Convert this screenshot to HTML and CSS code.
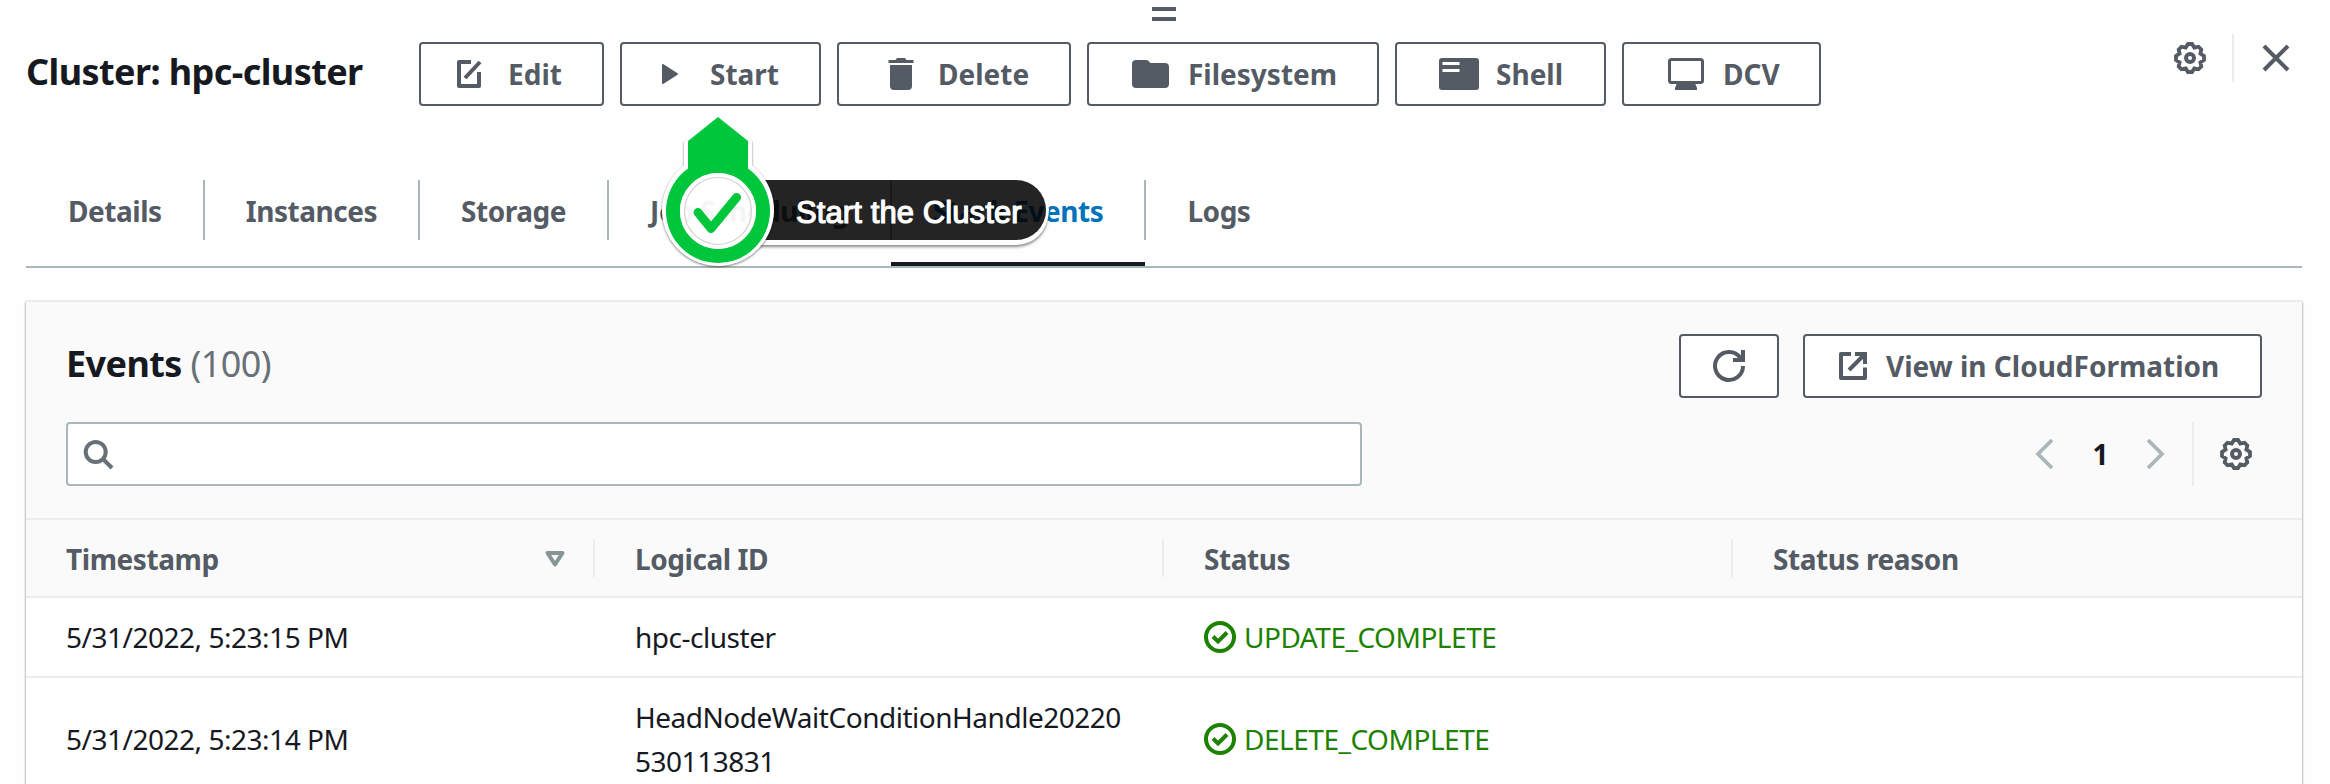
FILE: index.html
```
<!DOCTYPE html>
<html lang="en">
<head>
<meta charset="utf-8">
<title>Cluster: hpc-cluster</title>
<link rel="stylesheet" href="styles.css">
</head>
<body>
<div class="split-panel">
  <div class="drag-handle"><span></span><span></span></div>

  <header class="panel-header">
    <h1 class="panel-title">Cluster: hpc-cluster</h1>
    <div class="actions">
      <button class="btn btn-edit"><svg class="icon" width="32" height="32" viewBox="0 0 32 32"><path d="M17 4H5v24h20V14" fill="none" stroke="currentColor" stroke-width="4" stroke-linejoin="round"/><path d="M11 20 26 4" fill="none" stroke="currentColor" stroke-width="4"/></svg><span>Edit</span></button>
      <button class="btn btn-start"><svg class="icon" width="32" height="32" viewBox="0 0 32 32"><path d="M7 7 21 16 7 25z" fill="currentColor" stroke="currentColor" stroke-width="2" stroke-linejoin="round"/></svg><span>Start</span></button>
      <button class="btn btn-delete"><svg class="icon" width="32" height="32" viewBox="0 0 32 32"><path d="M3.500 2h7l1.500-2h8L21.500 2h7v3h-25zM5 7h22v21q0 4-4 4H9q-4 0-4-4z" fill="currentColor"/></svg><span>Delete</span></button>
      <button class="btn btn-files"><svg class="icon" width="38" height="32" viewBox="0 0 38 32"><path d="M4 2h10q1.500 0 2.500 1l2 2H33q4 0 4 4v17q0 4-4 4H4q-4 0-4-4V6q0-4 4-4z" fill="currentColor"/></svg><span>Filesystem</span></button>
      <button class="btn btn-shell"><svg class="icon" width="40" height="32" viewBox="0 0 40 32"><rect width="40" height="32" rx="3" fill="currentColor"/><path d="M3.500 4h17v3h-17zM3.500 11h17v3h-17z" fill="#fff"/></svg><span>Shell</span></button>
      <button class="btn btn-dcv"><svg class="icon" width="36" height="32" viewBox="0 0 36 32"><rect x="1.500" y="1.500" width="33" height="23" rx="2" fill="none" stroke="currentColor" stroke-width="3"/><path d="M9 25h18l2 5v2H7v-2z" fill="currentColor"/></svg><span>DCV</span></button>
    </div>
    <div class="panel-tools">
      <svg class="icon" width="32" height="32" viewBox="0 0 32 32"><use href="#gear"/></svg>
      <span class="tool-divider"></span>
      <svg class="icon" width="28" height="28" viewBox="0 0 28 28"><path d="M2 2 26 26M26 2 2 26" fill="none" stroke="currentColor" stroke-width="4"/></svg>
    </div>
  </header>

  <nav class="tabs">
    <a class="tab">Details</a>
    <a class="tab">Instances</a>
    <a class="tab">Storage</a>
    <a class="tab">Job Scheduling</a>
    <a class="tab active">Stack Events</a>
    <a class="tab">Logs</a>
  </nav>

  <section class="events">
    <div class="events-top">
      <div class="row">
        <h2>Events <span class="count">(100)</span></h2>
        <div class="row-actions">
          <button class="btn btn-refresh"><svg class="icon" width="32" height="32" viewBox="0 0 32 32"><path d="M30 16A14 14 0 1 1 27.500 8" fill="none" stroke="currentColor" stroke-width="4"/><path d="M30 0v10H20" fill="none" stroke="currentColor" stroke-width="4"/></svg></button>
          <button class="btn btn-view"><svg class="icon" width="32" height="32" viewBox="0 0 32 32"><path d="M14 4H4v24h24V17.500" fill="none" stroke="currentColor" stroke-width="4" stroke-linejoin="round"/><path d="M18 4h10v10M28 4 12 20" fill="none" stroke="currentColor" stroke-width="4"/></svg><span>View in CloudFormation</span></button>
        </div>
      </div>
      <div class="row filter-row">
        <div class="search"><svg class="icon" width="32" height="32" viewBox="0 0 32 32"><circle cx="13.700" cy="14" r="10" fill="none" stroke="currentColor" stroke-width="4"/><path d="m21 21 9 9" stroke="currentColor" stroke-width="4"/></svg></div>
        <div class="pager">
          <svg class="arrow" width="20" height="32" viewBox="0 0 20 32"><path d="M17 2 3 16l14 14" fill="none" stroke="currentColor" stroke-width="3.800"/></svg>
          <b>1</b>
          <svg class="arrow" width="20" height="32" viewBox="0 0 20 32"><path d="m3 2 14 14L3 30" fill="none" stroke="currentColor" stroke-width="3.800"/></svg>
          <span class="pager-divider"></span>
          <svg class="icon" width="32" height="32" viewBox="0 0 32 32"><g id="gear" fill="none" stroke="currentColor"><path d="M14 2H18L20.300 5.600 24.500 4.700 27.300 7.500 26.400 11.700 30 14V18L26.400 20.300 27.300 24.500 24.500 27.300 20.300 26.400 18 30H14L11.700 26.400 7.500 27.300 4.700 24.500 5.600 20.300 2 18V14L5.600 11.700 4.700 7.500 7.500 4.700 11.700 5.600Z" stroke-width="3.800"/><circle cx="16" cy="16" r="4" stroke-width="4"/></g></svg>
        </div>
      </div>
    </div>
    <div class="grid head">
      <div class="cell">Timestamp<svg class="sort" width="20" height="16" viewBox="0 0 20 16"><path d="M2.500 2h15L10 13.500z" fill="none" stroke="currentColor" stroke-width="4" stroke-linejoin="round"/></svg></div>
      <div class="cell">Logical ID</div>
      <div class="cell">Status</div>
      <div class="cell">Status reason</div>
    </div>
    <div class="grid body">
      <div class="cell">5/31/2022, 5:23:15 PM</div>
      <div class="cell">hpc-cluster</div>
      <div class="cell status"><svg width="32" height="32" viewBox="0 0 32 32"><use href="#ok"/></svg>UPDATE_COMPLETE</div>
      <div class="cell"></div>
    </div>
    <div class="grid body">
      <div class="cell">5/31/2022, 5:23:14 PM</div>
      <div class="cell">HeadNodeWaitConditionHandle20220<br>530113831</div>
      <div class="cell status"><svg width="32" height="32" viewBox="0 0 32 32"><g id="ok" fill="none" stroke="currentColor" stroke-width="4"><circle cx="16" cy="16" r="14"/><path d="m9 15.500 5 5 9-9"/></g></svg>DELETE_COMPLETE</div>
      <div class="cell"></div>
    </div>
  </section>

  <div class="callout">
    <div class="callout-label">Start the Cluster</div>
    <svg class="callout-pin" width="120" height="160" viewBox="0 0 120 160">
      <g class="pin-shadow">
        <path d="M26 24h68v24.500a56 56 0 1 1-68 0zM96 94a36 36 0 1 0-72 0 36 36 0 1 0 72 0z" fill="#fff" fill-rule="evenodd"/>
      </g>
      <circle cx="60" cy="94" r="35" fill="#fff" fill-opacity=".94"/>
      <path d="M60 0 90 24v27.500a52 52 0 1 1-60 0V24zM98 94a38 38 0 1 0-76 0 38 38 0 1 0 76 0z" fill="#00c63c" fill-rule="evenodd"/>
      <circle cx="60" cy="94" r="36" fill="none" stroke="#fff" stroke-width="4"/>
      <circle cx="60" cy="94" r="33.500" fill="none" stroke="#d8cfcf" stroke-width="1.200"/>
      <path d="m40 95.500 13 16 25.500-31" fill="none" stroke="#00c63c" stroke-width="9" stroke-linecap="round" stroke-linejoin="round"/>
    </svg>
  </div>
</div>
</body>
</html>
```
FILE: styles.css
```
* { box-sizing: border-box; }
body {
  margin: 0;
  width: 2330px;
  height: 784px;
  overflow: hidden;
  background: #fefefe;
  color: #16191f;
  font: 28px/44px "Noto Sans", sans-serif;
  letter-spacing: -.48px;
}
.split-panel { position: relative; height: 784px; overflow: hidden; padding: 0 28px 0 26px; }
svg { display: block; flex: none; overflow: visible; }
.icon { color: #545b64; }
h1, h2 { margin: 0; font-weight: 700; font-size: 36px; letter-spacing: -.58px; }
.drag-handle { display: flex; flex-direction: column; align-items: center; gap: 6px; height: 42px; padding-top: 7px; }
.drag-handle span { width: 24px; height: 4px; background: #545b64; }

.panel-header { display: flex; height: 138px; align-items: flex-start; }
.panel-title { width: 393px; line-height: 60px; white-space: nowrap; }
.actions { display: flex; gap: 16px; }
.btn {
  display: flex;
  align-items: center;
  height: 64px;
  padding: 0;
  border: 2px solid #545b64;
  border-radius: 4px;
  background: #fff;
  color: #545b64;
  font: 700 28px/44px "Noto Sans", sans-serif;
  letter-spacing: 0;
  white-space: nowrap;
}
.btn-edit { width: 185px; padding-left: 33px; gap: 22px; }
.btn-start { width: 201px; padding-left: 34px; gap: 22px; }
.btn-delete { width: 234px; padding-left: 46px; gap: 21px; }
.btn-files { width: 292px; padding-left: 43px; gap: 18px; }
.btn-shell { width: 211px; padding-left: 42px; gap: 17px; }
.btn-dcv { width: 199px; padding-left: 44px; gap: 19px; }
.panel-tools { display: flex; align-items: center; height: 48px; margin: -8px 12px 0 auto; }
.tool-divider { width: 2px; height: 48px; margin: 0 28px 0 26px; background: #eaeded; }

.tabs { display: flex; height: 88px; border-bottom: 2px solid #aab7b8; }
.tab {
  position: relative;
  height: 86px;
  padding: 9px 42px 0 42px;
  border-bottom: 4px solid transparent;
  color: #545b64;
  font-weight: 700;
  letter-spacing: -.46px;
  white-space: nowrap;
}
.tab:not(:last-child)::after { content: ""; position: absolute; right: -1px; top: 0; width: 2px; height: 60px; background: #aab7b8; }
.tab.active { border-color: #16191f; color: #0073bb; }

.events { margin-top: 32px; background: #fff; border-top: 2px solid #eaeded; box-shadow: 0 2px 2px rgba(0, 28, 36, .35), 1px 2px 2px rgba(0, 28, 36, .15), -1px 2px 2px rgba(0, 28, 36, .15); min-height: 600px; }
.events-top { height: 216px; padding: 32px 40px 0; background: #fafafa; }
.row { display: flex; justify-content: space-between; }
.row h2 { line-height: 60px; }
.count { color: #687078; font-weight: 400; }
.row-actions { display: flex; gap: 24px; }
.btn-refresh { width: 100px; padding-left: 32px; }
.btn-view { width: 459px; padding-left: 32px; gap: 17px; }
.filter-row { margin-top: 24px; }
.search { display: flex; align-items: center; width: 1296px; height: 64px; padding-left: 14px; border: 2px solid #aab7b8; border-radius: 4px; background: #fff; }
.search .icon { color: #687078; }
.pager { display: flex; align-items: center; height: 64px; margin-right: 10px; }
.pager b { margin: 0 37px; line-height: 60px; }
.arrow { color: #aab7b8; }
.pager-divider { width: 2px; height: 64px; margin: 0 26px 0 27px; background: #eaeded; }
.grid { display: grid; grid-template-columns: 569px 569px 569px 1fr; border-top: 2px solid #eaeded; }
.cell { position: relative; display: flex; align-items: center; padding: 17px 40px; }
.head { height: 78px; background: #fafafa; color: #545b64; font-weight: 700; letter-spacing: -.43px; }
.head .cell { padding: 2px 30px 0 40px; justify-content: space-between; }
.head .cell:not(:last-child)::after { content: ""; position: absolute; right: 0; top: 19px; width: 2px; height: 38px; background: #eaeded; }
.sort { color: #879596; }
.status { color: #1d8102; gap: 8px; }

.callout { position: absolute; left: 658px; top: 117px; width: 400px; height: 160px; }
.callout-pin { position: absolute; left: 0; top: 0; }
.pin-shadow { filter: drop-shadow(0 1px 1px rgba(0, 0, 0, .5)); }
.callout-label {
  position: absolute;
  left: 100px;
  top: 63px;
  width: 288px;
  height: 60px;
  padding-left: 38px;
  border-radius: 0 30px 30px 0;
  background: rgba(0, 0, 0, .86);
  box-shadow: 0 0 0 3px #fff, 0 3px 0 2px #fff, 0 5px 3px 2px rgba(0, 0, 0, .45);
  color: #fff;
  font: 31px/65px "Liberation Sans", sans-serif;
  letter-spacing: .1px;
  -webkit-text-stroke: 1.2px #fff;
  white-space: nowrap;
}
```
